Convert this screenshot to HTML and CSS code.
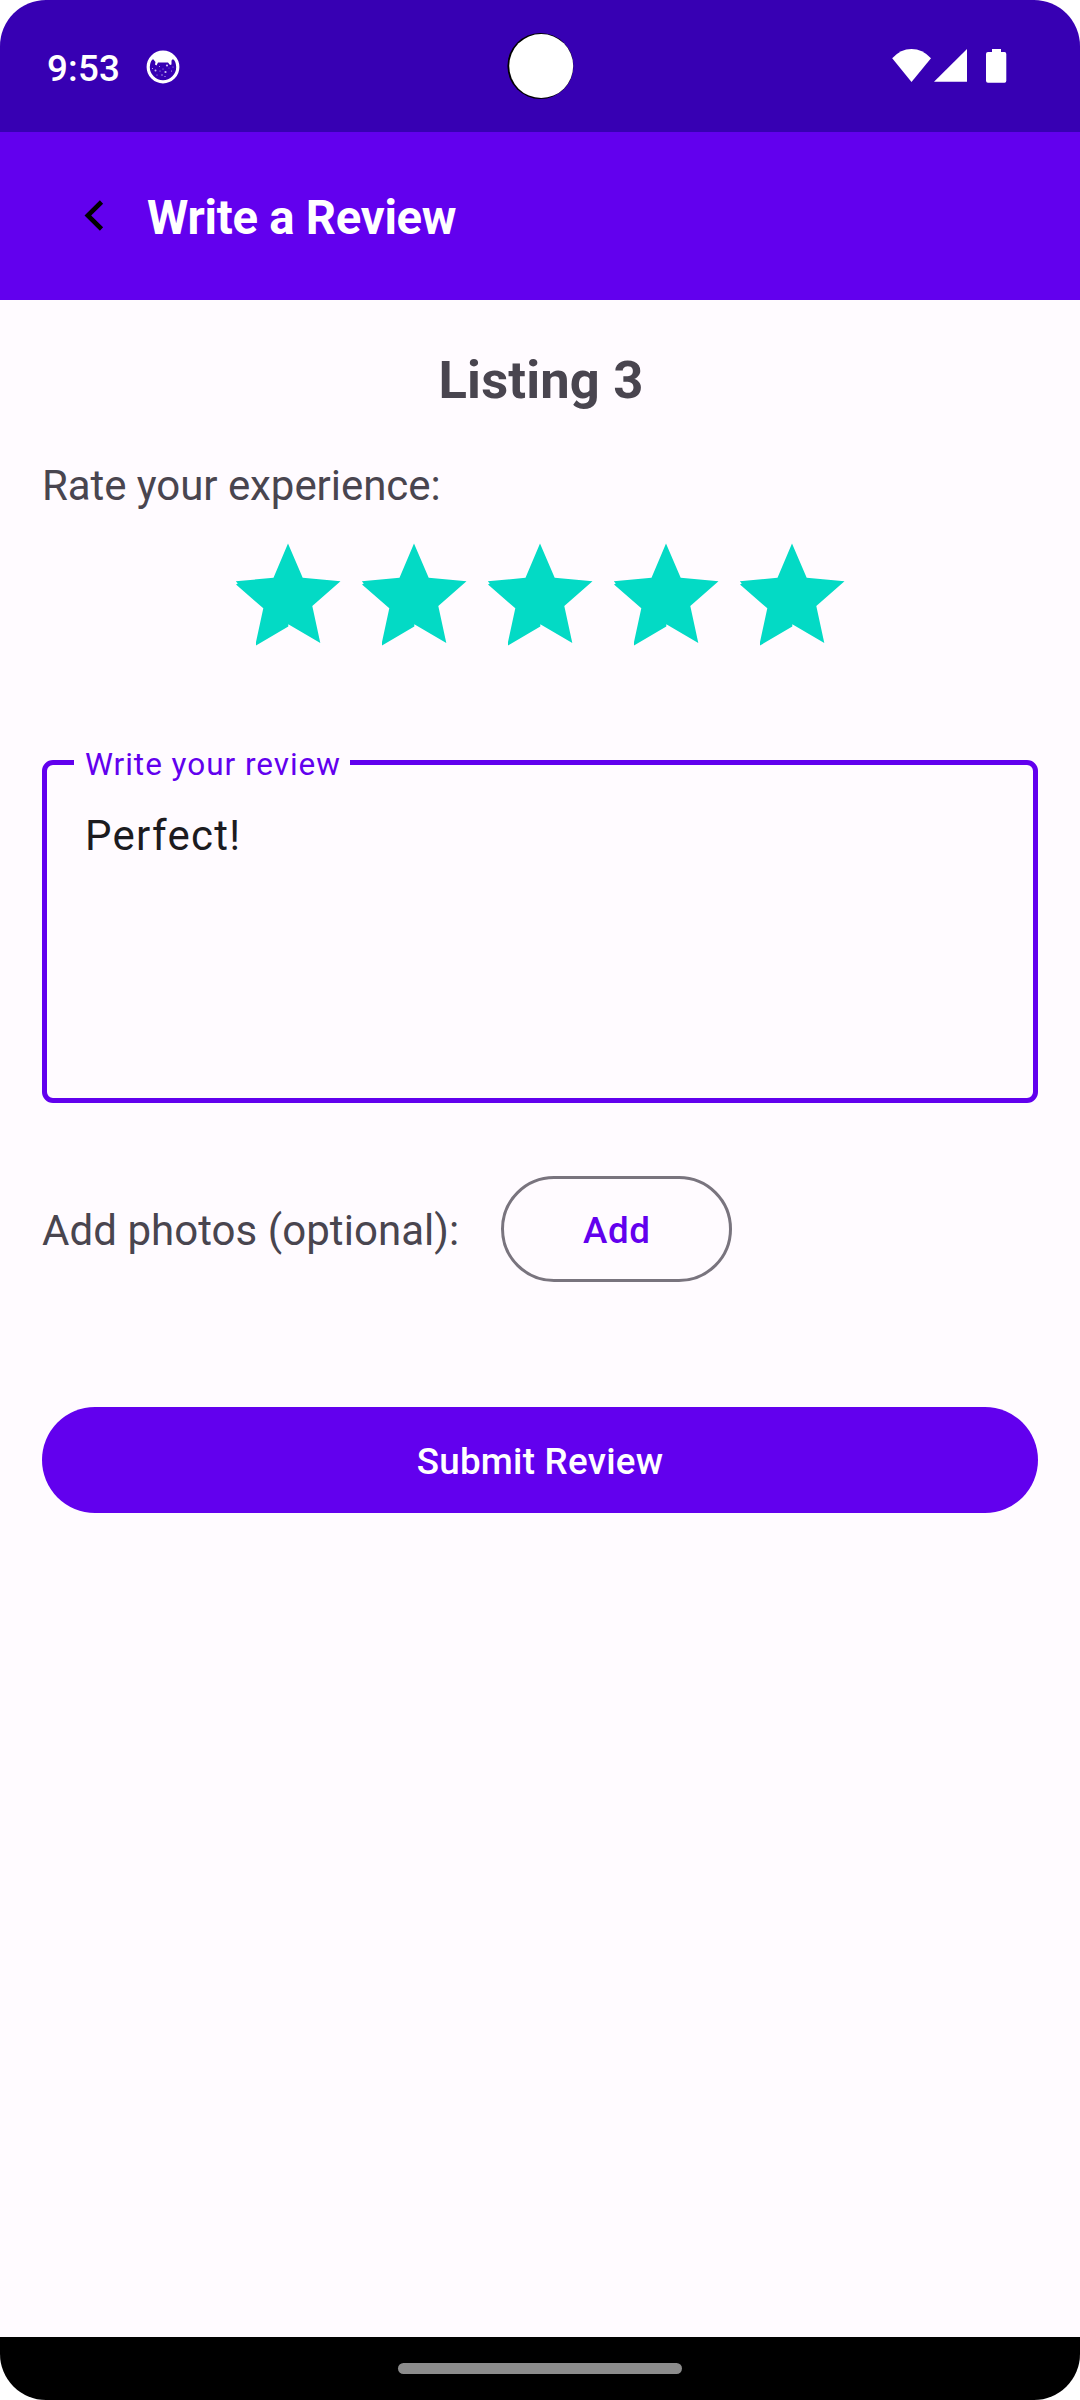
FILE: index.html
```html
<!DOCTYPE html>
<html lang="en">
<head>
<meta charset="utf-8">
<title>Write a Review</title>
<link rel="stylesheet" href="styles.css">
</head>
<body>
<svg width="0" height="0" class="defs" aria-hidden="true">
  <symbol id="star" viewBox="0 0 106 104">
    <path d="M53 .5 67.700 34.800 105.500 38.200 77.300 63 85.300 100 53.300 81.200V83.500L21 102.500V99L28.300 65.300 1 41.500 2.800 40.500 .8 38.200 38.500 34.800Z"/>
  </symbol>
</svg>
<div class="screen">
  <header class="status">
    <span class="time">9:53</span>
    <svg class="notif" viewBox="0 0 34 34">
      <circle cx="17" cy="17" r="14.800" fill="none" stroke="#fff" stroke-width="3.200"/>
      <path fill="#fff" d="M5 11 9 4 17 1.500 25 4 29 11 27 9 25.500 10.500V14.500L24 15 22 12.500H12L10.500 15.500 9 14.500 9.500 12 7 9Z"/>
      <g fill="#cbbcf0"><circle cx="9.500" cy="20.500" r="1"/><circle cx="19.500" cy="22" r="1.100"/><circle cx="14" cy="21" r=".5"/><circle cx="21" cy="15.500" r="1.100"/><circle cx="13.500" cy="16.500" r=".5"/><circle cx="25.500" cy="21" r=".6"/><circle cx="16" cy="25" r=".7"/><circle cx="11" cy="25" r=".5"/><circle cx="19" cy="26.500" r=".6"/><circle cx="6.500" cy="18.500" r=".6"/><circle cx="17" cy="19" r=".5"/><circle cx="23" cy="18" r=".4"/><circle cx="27" cy="17" r=".5"/></g>
    </svg>
    <svg class="signals" viewBox="0 0 116 34" fill="#fff">
      <path d="M.2 9.300Q8.500 0 19.500 0T39 9.300L19.500 33Z"/>
      <path d="M75 0V32.700H42Z"/>
      <path d="M100 0H109V3H112.500Q114.300 3 114.300 5V31.700Q114.300 33.700 112.500 33.700H96Q94 33.700 94 31.700V5Q94 3 96 3H100Z"/>
    </svg>
    <svg class="camera" viewBox="0 0 68 68"><circle cx="33.400" cy="34" r="33" fill="#000"/><circle cx="34.200" cy="34" r="32" fill="#fff"/></svg>
  </header>
  <div class="appbar">
    <svg class="back" viewBox="0 0 20 32"><path d="M17.500 2 3.800 15.500 17.500 29" fill="none" stroke="#000" stroke-width="4.600"/></svg>
    <h1>Write a Review</h1>
  </div>
  <main>
    <h2>Listing 3</h2>
    <p class="rate">Rate your experience:</p>
    <div class="stars">
      <svg><use href="#star"/></svg><svg><use href="#star"/></svg><svg><use href="#star"/></svg><svg><use href="#star"/></svg><svg><use href="#star"/></svg>
    </div>
    <div class="field">
      <span class="label">Write your review</span>
      <div class="value">Perfect!</div>
    </div>
    <div class="photos">
      <span>Add photos (optional):</span>
      <button class="add">Add</button>
    </div>
    <button class="submit">Submit Review</button>
  </main>
  <footer><div class="handle"></div></footer>
</div>
</body>
</html>
```

FILE: styles.css
```css
* { box-sizing: border-box; margin: 0; padding: 0; }
body { background: #fff; font-family: Roboto, sans-serif; }
.defs { position: absolute; }
svg { display: block; flex: none; }

.screen {
  width: 1080px;
  height: 2400px;
  display: flex;
  flex-direction: column;
  overflow: hidden;
  border-radius: 46px;
  background: #fffbff;
}

.status {
  position: relative;
  height: 132px;
  flex: none;
  display: flex;
  align-items: center;
  padding: 0 72px 0 47px;
  background: #3700b3;
  color: #fff;
}
.time { font-size: 36.75px; font-weight: 500; line-height: 44px; padding-top: 5px; width: 99px; letter-spacing: .15px; }
.notif { width: 34px; height: 34px; margin-top: 2px; }
.signals { width: 116px; height: 34px; margin-left: auto; }
.camera { position: absolute; left: 507px; top: 32px; width: 68px; height: 68px; }

.appbar {
  height: 168px;
  flex: none;
  display: flex;
  align-items: center;
  padding-left: 84px;
  background: #6200ee;
}
.back { width: 20px; height: 32px; margin-right: 43px; }
h1 { font-size: 47.25px; line-height: 56px; font-weight: 700; color: #fff; padding-top: 4px; letter-spacing: -.27px; }

main {
  flex: 1;
  display: flex;
  flex-direction: column;
  padding: 50px 42px 0;
  color: #49454f;
  font-size: 42px;
}
h2 { font-size: 52.5px; line-height: 60px; text-align: center; letter-spacing: .15px; padding-left: 2px; }
.rate { line-height: 48px; margin-top: 52px; letter-spacing: -.06px; }
.stars { display: flex; justify-content: center; gap: 20px; margin-top: 33px; }
.stars svg { width: 106px; height: 104px; fill: #03dac5; }

.field {
  position: relative;
  height: 343px;
  margin-top: 113px;
  padding: 46px 38px;
  border: 5px solid #6200ee;
  border-radius: 11px;
}
.label {
  position: absolute;
  left: 27px;
  top: -18px;
  width: 276px;
  padding-left: 11px;
  background: #fffbff;
  color: #6200ee;
  font-size: 31.5px;
  line-height: 36px;
  letter-spacing: .97px;
  white-space: nowrap;
}
.value { color: #1c1b1f; line-height: 50px; letter-spacing: 1.31px; }

.photos { display: flex; align-items: center; gap: 42px; margin-top: 73px; }
.photos span { line-height: 50px; padding-top: 3px; letter-spacing: .05px; }
button { font: 500 36.75px/44px Roboto, sans-serif; letter-spacing: .26px; height: 106px; border-radius: 53px; padding-top: 3px; }
.add { width: 231px; border: 3px solid #79747e; background: transparent; color: #6200ee; letter-spacing: .5px; }
.submit { margin-top: 125px; border: 0; background: #6200ee; color: #fff; }

footer { height: 63px; flex: none; display: flex; justify-content: center; padding-top: 26px; background: #000; }
.handle { width: 284px; height: 11px; border-radius: 5.5px; background: #8c8c8c; }
```
